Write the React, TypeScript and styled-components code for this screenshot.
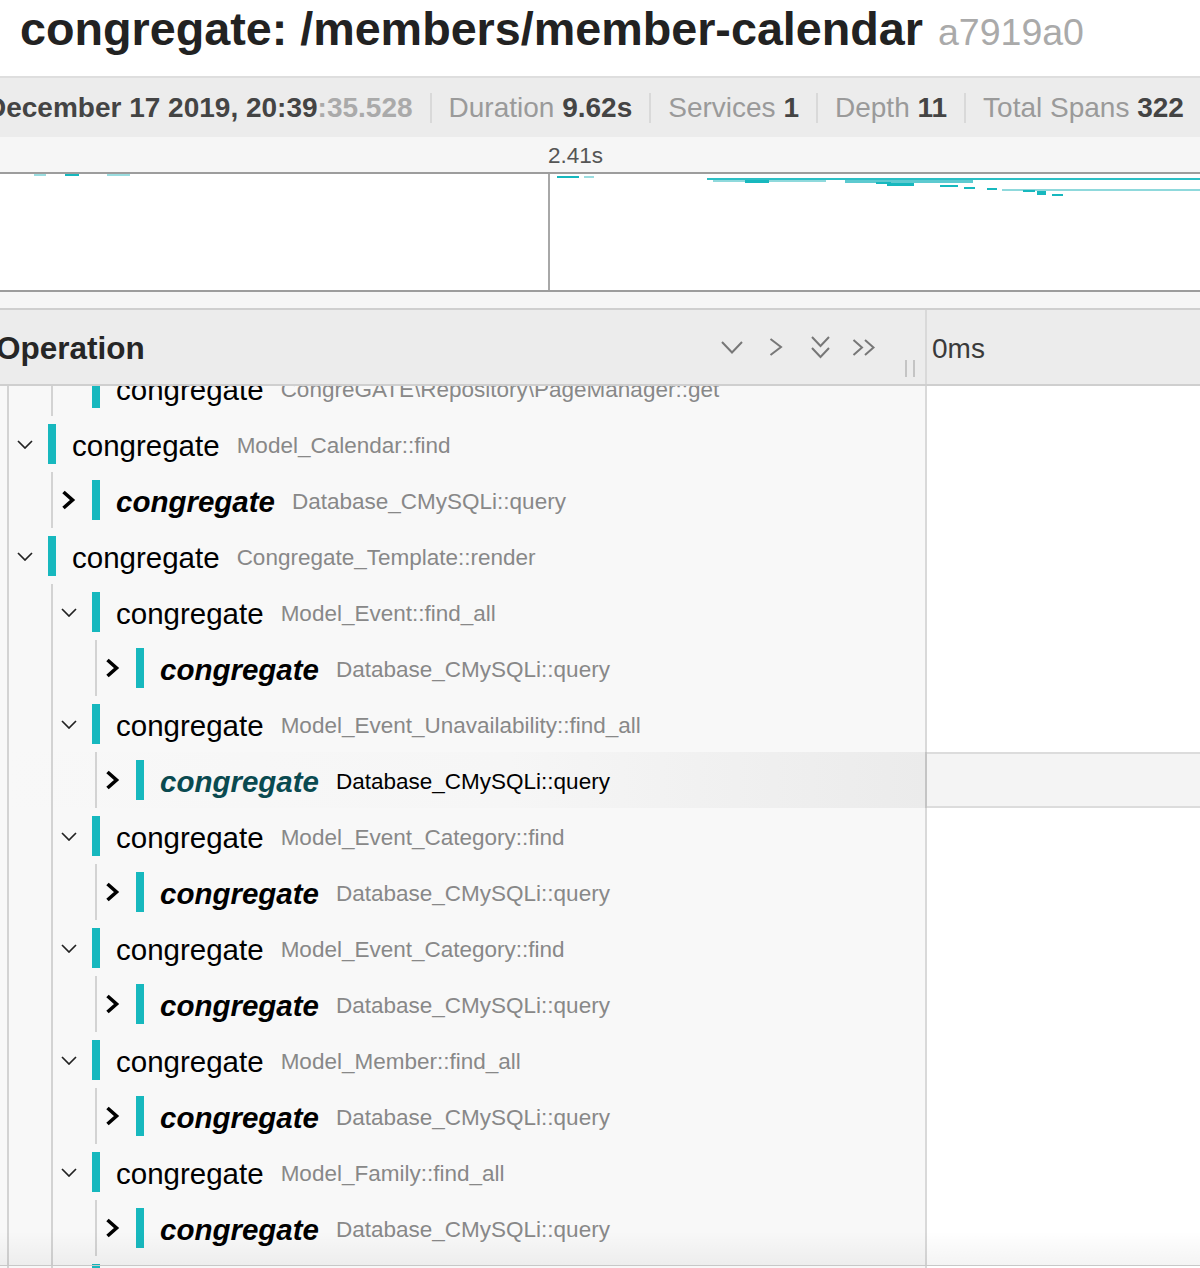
import React from 'react';
import styled, { createGlobalStyle } from 'styled-components';

const TEAL = '#17b8be';

const GlobalStyle = createGlobalStyle`
    html, body {
        margin: 0;
        padding: 0;
        background: #fff;
    }
    body {
        font-family: "Liberation Sans", Arial, Helvetica, sans-serif;
        overflow: hidden;
    }
`;

const Page = styled.div`
    position: relative;
    width: 1200px;
    height: 1268px;
    overflow: hidden;
    background: #fff;
    display: flex;
    flex-direction: column;

    &::after {
        content: '';
        position: absolute;
        left: 0;
        right: 0;
        bottom: 2px;
        height: 34px;
        background: linear-gradient(rgba(0, 0, 0, 0), rgba(0, 0, 0, 0.045));
        border-bottom: 1px solid #c8c8c8;
        pointer-events: none;
    }
`;

const TitleBar = styled.div`
    flex-shrink: 0;
    height: 76px;
    box-sizing: border-box;
    padding: 3px 0 0 20px;
    display: flex;
    align-items: baseline;
    white-space: nowrap;
    line-height: 52px;
`;

const Title = styled.h1`
    margin: 0;
    font-size: 46.7px;
    font-weight: 700;
    color: #222;
`;

const TraceId = styled.span`
    margin-left: 15px;
    font-size: 37.5px;
    color: #aaa;
`;

const Stats = styled.div`
    flex-shrink: 0;
    height: 61px;
    box-sizing: border-box;
    border-top: 2px solid #dedede;
    background: #ececec;
    display: flex;
    align-items: center;
    white-space: nowrap;
    font-size: 28px;
    color: #9a9a9a;

    & > :first-child {
        margin-left: -14px;
    }
`;

const Stat = styled.div`
    padding: 0 17px;
    line-height: 30px;
    border-left: 2px solid #d9d9d9;

    &:first-child {
        border-left: none;
        padding-left: 0;
    }
`;

const Value = styled.strong`
    color: #444;
`;

const Muted = styled.span`
    color: #aaa;
`;

const Ticks = styled.div`
    flex-shrink: 0;
    height: 37px;
    box-sizing: border-box;
    background: #f6f6f6;
    border-bottom: 2px solid #9d9d9d;
    display: grid;
    grid-template-columns: 548px 1fr;
    align-items: center;
    padding-top: 2px;
    font-size: 22.5px;
    color: #555;
`;

const Minimap = styled.div`
    flex-shrink: 0;
    height: 118px;
    box-sizing: border-box;
    border-bottom: 2px solid #9d9d9d;

    svg {
        display: block;
    }
`;

const Strip = styled.div`
    flex-shrink: 0;
    height: 18px;
    box-sizing: border-box;
    background: #f6f6f6;
    border-bottom: 2px solid #cfcfcf;
`;

const HeaderRow = styled.div`
    flex-shrink: 0;
    height: 76px;
    box-sizing: border-box;
    background: #ececec;
    border-bottom: 2px solid #cfcfcf;
    display: grid;
    grid-template-columns: 925px 2px 1fr;
`;

const HeaderName = styled.div`
    display: flex;
    align-items: center;
`;

const HeaderTitle = styled.div`
    flex: 1;
    margin: 3px 0 0 -4px;
    font-size: 31.5px;
    font-weight: 700;
    color: #262626;
`;

const Controls = styled.div`
    display: grid;
    grid-template-columns: repeat(4, 44px);
    justify-items: center;
    align-items: center;
    color: #777;
    margin-right: 19px;

    svg {
        display: block;
    }
`;

const Resizer = styled.div`
    align-self: flex-end;
    margin: 0 10px 7px 0;
    width: 10px;
    height: 17px;
    box-sizing: border-box;
    border-left: 2px solid #c4c4c4;
    border-right: 2px solid #c4c4c4;
`;

const Divider = styled.div<{ $dark?: boolean }>`
    background: ${p => (p.$dark ? '#c4c4c4' : '#d9d9d9')};
`;

const HeaderTime = styled.div`
    display: flex;
    align-items: center;
    padding: 3px 0 0 5px;
    font-size: 28px;
    color: #3a3a3a;
`;

const Body = styled.div`
    flex: 1;
    overflow: hidden;
`;

const List = styled.div`
    margin-top: -26px;
`;

const Row = styled.div`
    height: 56px;
    display: grid;
    grid-template-columns: 925px 2px 1fr;
`;

const NameCell = styled.div<{ $hover?: boolean }>`
    display: flex;
    align-items: stretch;
    padding-left: 7px;
    white-space: nowrap;
    overflow: hidden;
    background: ${p =>
        p.$hover ? 'linear-gradient(90deg, #f8f8f8, #f6f6f6 55%, #ebebeb)' : '#f8f8f8'};
`;

const Indent = styled.span`
    flex-shrink: 0;
    width: 44px;
    box-sizing: border-box;
    border-left: 2px solid #d3d3d3;
`;

const Toggle = styled.span`
    flex-shrink: 0;
    width: 41px;
    box-sizing: border-box;
    border-left: 2px solid #d3d3d3;
    display: flex;
    align-items: center;
    padding-left: 8px;

    svg {
        display: block;
    }
`;

const Bar = styled.span`
    flex-shrink: 0;
    align-self: center;
    width: 8px;
    height: 40px;
    background: ${TEAL};
    margin-right: 16px;
`;

const Service = styled.span<{ $collapsed?: boolean; $hover?: boolean }>`
    align-self: center;
    margin-top: 3px;
    font-size: 29.5px;
    font-weight: ${p => (p.$collapsed ? 700 : 400)};
    font-style: ${p => (p.$collapsed ? 'italic' : 'normal')};
    color: ${p => (p.$hover ? '#0a4a50' : '#000')};
`;

const Operation = styled.span<{ $hover?: boolean }>`
    align-self: center;
    margin: 4px 0 0 17px;
    font-size: 22.5px;
    color: ${p => (p.$hover ? '#000' : '#888')};
`;

const TimeCell = styled.div<{ $hover?: boolean }>`
    background: ${p => (p.$hover ? '#f4f4f4' : '#fff')};
    box-shadow: ${p => (p.$hover ? 'inset 0 2px 0 #dcdcdc, inset 0 -2px 0 #dcdcdc' : 'none')};
`;

const ChevronDown = () => (
    <svg width="16" height="9" viewBox="0 0 16 9">
        <polyline points="1,1 8,8 15,1" fill="none" stroke="#222" strokeWidth="1.7" />
    </svg>
);

const ChevronRight = () => (
    <svg width="15" height="20" viewBox="0 0 15 20">
        <polyline points="2.5,2 11.5,10 2.5,18" fill="none" stroke="#000" strokeWidth="3.6" />
    </svg>
);

const HeaderIcons = () => (
    <Controls>
        <svg width="22" height="13" viewBox="0 0 22 13">
            <polyline points="1,1 11,11.5 21,1" fill="none" stroke="currentColor" strokeWidth="2" />
        </svg>
        <svg width="14" height="18" viewBox="0 0 14 18">
            <polyline points="1.5,1 12,9 1.5,17" fill="none" stroke="currentColor" strokeWidth="2" />
        </svg>
        <svg width="21" height="23" viewBox="0 0 21 23">
            <polyline points="2,1 10.5,10 19,1" fill="none" stroke="currentColor" strokeWidth="2" />
            <polyline points="2,12 10.5,21 19,12" fill="none" stroke="currentColor" strokeWidth="2" />
        </svg>
        <svg width="25" height="17" viewBox="0 0 25 17">
            <polyline points="1.5,1 10,8.5 1.5,16" fill="none" stroke="currentColor" strokeWidth="2" />
            <polyline points="13,1 21.5,8.5 13,16" fill="none" stroke="currentColor" strokeWidth="2" />
        </svg>
    </Controls>
);

// minimap spans: [x, y, width, height, colour]
const miniSpans: [number, number, number, number, string][] = [
    [34, 0, 12, 2, '#9adde0'],
    [65, 0, 14, 2, TEAL],
    [107, 0, 23, 2, '#9adde0'],
    [557, 2, 22, 2, TEAL],
    [584, 2, 10, 2, '#9adde0'],
    [707, 4, 493, 2, '#2dbfc5'],
    [713, 6, 113, 2, '#8fd9dc'],
    [745, 6, 24, 3, TEAL],
    [845, 6, 128, 3, '#5dcad0'],
    [876, 8, 15, 2, TEAL],
    [887, 9, 27, 3, TEAL],
    [940, 11, 18, 2, TEAL],
    [964, 13, 11, 2, TEAL],
    [987, 14, 10, 2, TEAL],
    [1002, 15, 198, 2, '#8fd9dc'],
    [1023, 16, 12, 2, TEAL],
    [1037, 17, 9, 4, TEAL],
    [1052, 20, 11, 2, TEAL],
];

type Span = {
    level: number;
    op: string;
    kind: 'leaf' | 'open' | 'closed';
    hover?: boolean;
};

const QUERY = 'Database_CMySQLi::query';

const spans: Span[] = [
    { level: 1, op: 'CongreGATE\\Repository\\PageManager::get', kind: 'leaf' },
    { level: 0, op: 'Model_Calendar::find', kind: 'open' },
    { level: 1, op: QUERY, kind: 'closed' },
    { level: 0, op: 'Congregate_Template::render', kind: 'open' },
    { level: 1, op: 'Model_Event::find_all', kind: 'open' },
    { level: 2, op: QUERY, kind: 'closed' },
    { level: 1, op: 'Model_Event_Unavailability::find_all', kind: 'open' },
    { level: 2, op: QUERY, kind: 'closed', hover: true },
    { level: 1, op: 'Model_Event_Category::find', kind: 'open' },
    { level: 2, op: QUERY, kind: 'closed' },
    { level: 1, op: 'Model_Event_Category::find', kind: 'open' },
    { level: 2, op: QUERY, kind: 'closed' },
    { level: 1, op: 'Model_Member::find_all', kind: 'open' },
    { level: 2, op: QUERY, kind: 'closed' },
    { level: 1, op: 'Model_Family::find_all', kind: 'open' },
    { level: 2, op: QUERY, kind: 'closed' },
    { level: 1, op: 'Model_Household::find', kind: 'open' },
];

const SpanRow = ({ span }: { span: Span }) => (
    <Row>
        <NameCell $hover={span.hover}>
            {Array.from({ length: span.level }).map((_, i) => (
                <Indent key={i} />
            ))}
            <Toggle>
                {span.kind === 'open' && <ChevronDown />}
                {span.kind === 'closed' && <ChevronRight />}
            </Toggle>
            <Bar />
            <Service $collapsed={span.kind === 'closed'} $hover={span.hover}>
                congregate
            </Service>
            <Operation $hover={span.hover}>{span.op}</Operation>
        </NameCell>
        <Divider $dark={span.hover} />
        <TimeCell $hover={span.hover} />
    </Row>
);

const App = () => (
    <>
        <GlobalStyle />
        <Page>
            <TitleBar>
                <Title>congregate: /members/member-calendar</Title>
                <TraceId>a7919a0</TraceId>
            </TitleBar>
            <Stats>
                <Stat>
                    <Value>
                        December 17 2019, 20:39<Muted>:35.528</Muted>
                    </Value>
                </Stat>
                <Stat>
                    Duration <Value>9.62s</Value>
                </Stat>
                <Stat>
                    Services <Value>1</Value>
                </Stat>
                <Stat>
                    Depth <Value>11</Value>
                </Stat>
                <Stat>
                    Total Spans <Value>322</Value>
                </Stat>
            </Stats>
            <Ticks>
                <span />
                <span>2.41s</span>
            </Ticks>
            <Minimap>
                <svg width="1200" height="116" viewBox="0 0 1200 116">
                    <rect x="548" y="0" width="2" height="116" fill="#a8a8a8" />
                    {miniSpans.map(([x, y, w, h, c], i) => (
                        <rect key={i} x={x} y={y} width={w} height={h} fill={c} />
                    ))}
                </svg>
            </Minimap>
            <Strip />
            <HeaderRow>
                <HeaderName>
                    <HeaderTitle>Operation</HeaderTitle>
                    <HeaderIcons />
                    <Resizer />
                </HeaderName>
                <Divider />
                <HeaderTime>0ms</HeaderTime>
            </HeaderRow>
            <Body>
                <List>
                    {spans.map((s, i) => (
                        <SpanRow key={i} span={s} />
                    ))}
                </List>
            </Body>
        </Page>
    </>
);

export default App;
